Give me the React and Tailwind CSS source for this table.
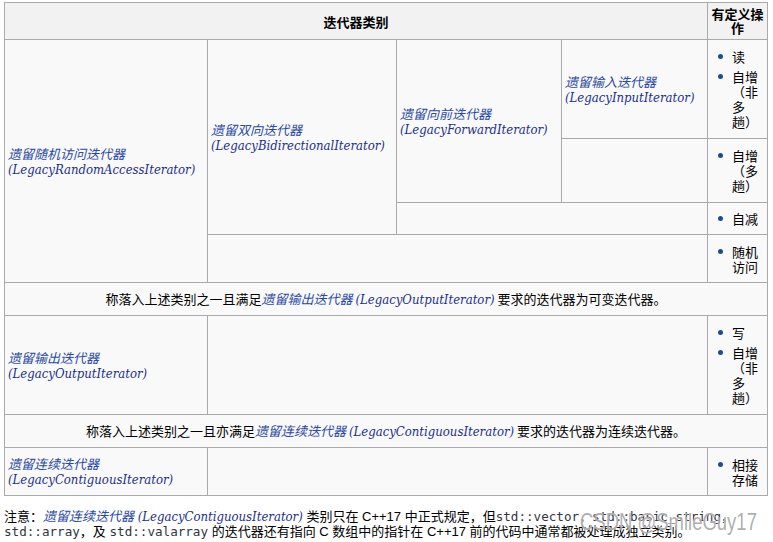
import React from "react";

const cjk = '"Noto Sans CJK SC", sans-serif';
const bodyFont = { fontFamily: '"Liberation Sans", "Noto Sans CJK SC", sans-serif' };
const mono = { fontFamily: '"DejaVu Sans Mono", monospace' };

function Lk({ zh, en, br = true }) {
  return (
    <span className="italic text-[#2a4aa6]">
      <span style={{ fontFamily: cjk }}>{zh}</span>
      {br ? <br /> : " "}
      <span
        className="text-[#1b2f8f]"
        style={{ fontFamily: '"DejaVu Serif Condensed", "DejaVu Serif", serif', fontStretch: "condensed" }}
      >
        ({en})
      </span>
    </span>
  );
}

function Ops({ items }) {
  return (
    <ul className="flex flex-col gap-[5px]">
      {items.map((t, i) => (
        <li key={i} className="flex">
          <span className="w-[24px] shrink-0 h-[15px] flex items-center pl-[10px]">
            <span className="block w-[5px] h-[5px] rounded-full bg-[#1d4e89]" />
          </span>
          <span className="w-[30px] leading-[15px] break-all">{t}</span>
        </li>
      ))}
    </ul>
  );
}

const td = "border border-[#aaaaaa] bg-[#f9f9f9] align-middle px-[3px] leading-[15px]";
const opTd = "border border-[#aaaaaa] bg-[#f9f9f9] align-middle pl-0 pr-[3px] leading-[15px]";

export default function App() {
  return (
    <div className="bg-white w-[773px] h-[542px] relative overflow-hidden text-black text-[13px]" style={bodyFont}>
      <div className="pl-[4px] pt-[2px]">
        <table className="border-collapse table-fixed w-[763px] border border-[#aaaaaa]">
          <colgroup>
            <col className="w-[203px]" />
            <col className="w-[189px]" />
            <col className="w-[165px]" />
            <col className="w-[146px]" />
            <col className="w-[60px]" />
          </colgroup>
          <tbody>
            <tr className="h-[37px]">
              <th colSpan={4} className="border border-[#aaaaaa] bg-[#f2f2f2] font-bold text-center align-middle leading-[15px]" style={{ fontFamily: cjk }}>
                迭代器类别
              </th>
              <th className="border border-[#aaaaaa] bg-[#f2f2f2] font-bold text-center align-middle leading-[14px] px-[3px]" style={{ fontFamily: cjk }}>
                有定义操作
              </th>
            </tr>
            <tr className="h-[99px]">
              <td rowSpan={4} className={td}>
                <Lk zh="遗留随机访问迭代器" en="LegacyRandomAccessIterator" />
              </td>
              <td rowSpan={3} className={td}>
                <Lk zh="遗留双向迭代器" en="LegacyBidirectionalIterator" />
              </td>
              <td rowSpan={2} className={td}>
                <Lk zh="遗留向前迭代器" en="LegacyForwardIterator" />
              </td>
              <td className={td}>
                <Lk zh="遗留输入迭代器" en="LegacyInputIterator" />
              </td>
              <td className={opTd} style={{ fontFamily: cjk }}>
                <Ops items={["读", "自增（非多趟）"]} />
              </td>
            </tr>
            <tr className="h-[64px]">
              <td className={td}></td>
              <td className={opTd} style={{ fontFamily: cjk }}>
                <Ops items={["自增（多趟）"]} />
              </td>
            </tr>
            <tr className="h-[32px]">
              <td colSpan={2} className={td}></td>
              <td className={opTd} style={{ fontFamily: cjk }}>
                <Ops items={["自减"]} />
              </td>
            </tr>
            <tr className="h-[48px]">
              <td colSpan={3} className={td}></td>
              <td className={opTd} style={{ fontFamily: cjk }}>
                <Ops items={["随机访问"]} />
              </td>
            </tr>
            <tr className="h-[33px]">
              <td colSpan={5} className={td + " text-center"} style={{ fontFamily: cjk }}>
                称落入上述类别之一且满足<Lk zh="遗留输出迭代器" en="LegacyOutputIterator" br={false} /> 要求的迭代器为可变迭代器。
              </td>
            </tr>
            <tr className="h-[99px]">
              <td className={td}>
                <Lk zh="遗留输出迭代器" en="LegacyOutputIterator" />
              </td>
              <td colSpan={3} className={td}></td>
              <td className={opTd} style={{ fontFamily: cjk }}>
                <Ops items={["写", "自增（非多趟）"]} />
              </td>
            </tr>
            <tr className="h-[33px]">
              <td colSpan={5} className={td + " text-center"} style={{ fontFamily: cjk }}>
                称落入上述类别之一且亦满足<Lk zh="遗留连续迭代器" en="LegacyContiguousIterator" br={false} /> 要求的迭代器为连续迭代器。
              </td>
            </tr>
            <tr className="h-[48px]">
              <td className={td}>
                <Lk zh="遗留连续迭代器" en="LegacyContiguousIterator" />
              </td>
              <td colSpan={3} className={td}></td>
              <td className={opTd} style={{ fontFamily: cjk }}>
                <Ops items={["相接存储"]} />
              </td>
            </tr>
          </tbody>
        </table>
      </div>
      <div className="pl-[4px] pt-[12px] leading-[15px]">
        <div className="whitespace-nowrap">
          注意：<Lk zh="遗留连续迭代器" en="LegacyContiguousIterator" br={false} /> 类别只在 C++17 中正式规定，但
          <code className="text-[12.6px] text-[#333344]" style={mono}>std::vector</code>
          ，
          <code className="text-[12.6px] text-[#333344]" style={mono}>std::basic_string</code>
          ，
        </div>
        <div className="whitespace-nowrap">
          <code className="text-[12.6px] text-[#333344]" style={mono}>std::array</code>
          ，及{" "}
          <code className="text-[12.6px] text-[#333344]" style={mono}>std::valarray</code>{" "}
          的迭代器还有指向 C 数组中的指针在 C++17 前的代码中通常都被处理成独立类别。
        </div>
      </div>
      <div
        className="absolute left-[580px] top-[510px] text-[24px] leading-[24px] text-[#8c8c8c]/70 whitespace-nowrap origin-left scale-x-[0.77]"
        style={{ fontFamily: '"Liberation Sans", sans-serif', textShadow: "0 0 1px #fff" }}
      >
        CSDN @SmileGuy17
      </div>
    </div>
  );
}
